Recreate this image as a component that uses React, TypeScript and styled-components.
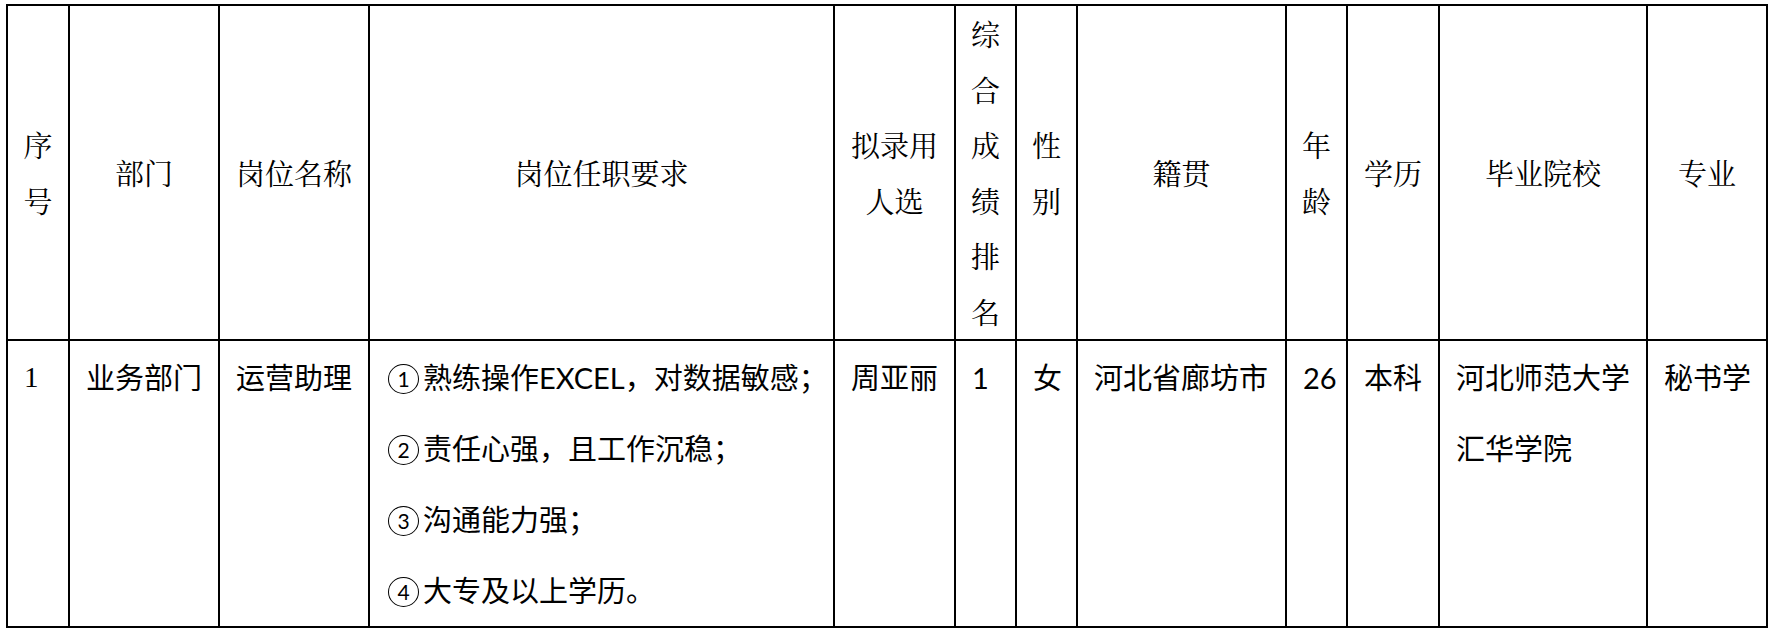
import React from "react";
import styled, { createGlobalStyle } from "styled-components";

const GlobalStyle = createGlobalStyle`
  html, body {
    margin: 0;
    padding: 0;
    background: #fff;
  }
  body {
    font-family: "Noto Sans CJK SC", sans-serif;
    color: #000;
  }
`;

const Page = styled.div`
  padding: 4px 0 0 6px;
`;

const Table = styled.table`
  border-collapse: collapse;
  table-layout: fixed;
  width: 1762px;
  border: 2px solid #000;
`;

const HeadCell = styled.th`
  height: 333px;
  padding: 0;
  border: 2px solid #000;
  text-align: center;
  vertical-align: middle;
  font-family: "Noto Serif CJK SC", "Noto Sans CJK SC", serif;
  font-weight: 400;
  font-size: 29px;
  line-height: 55.5px;
  white-space: nowrap;
`;

const BodyCell = styled.td<{ $serif?: boolean }>`
  height: 280px;
  padding: 1px 14px 0 16px;
  border: 2px solid #000;
  text-align: left;
  vertical-align: top;
  font-family: ${(p) =>
    p.$serif
      ? `"Liberation Serif", "Noto Sans CJK SC", serif`
      : `"Lato", "Noto Sans CJK SC", sans-serif`};
  font-size: 29px;
  line-height: 71px;
  white-space: nowrap;
`;

const Line = styled.div`
  display: block;
`;

// circled list number, drawn as a ring around a real digit
const Circled = styled.span`
  display: inline-flex;
  align-items: center;
  justify-content: center;
  box-sizing: border-box;
  width: 31px;
  height: 30px;
  margin: 0 4px 0 2px;
  border: 1.7px solid #000;
  border-radius: 50%;
  font-family: "Lato", sans-serif;
  font-size: 21px;
  line-height: 1;
  vertical-align: middle;
  position: relative;
  top: -3px;
`;

const columns = [62, 150, 150, 465, 121, 61, 61, 209, 61, 92, 208, 120];

const headers: string[][] = [
  ["序", "号"],
  ["部门"],
  ["岗位名称"],
  ["岗位任职要求"],
  ["拟录用", "人选"],
  ["综", "合", "成", "绩", "排", "名"],
  ["性", "别"],
  ["籍贯"],
  ["年", "龄"],
  ["学历"],
  ["毕业院校"],
  ["专业"],
];

type Entry = { num?: number; text: string };
type Cell = { lines: Entry[]; serif?: boolean };

const row: Cell[] = [
  { lines: [{ text: "1" }], serif: true },
  { lines: [{ text: "业务部门" }] },
  { lines: [{ text: "运营助理" }] },
  {
    lines: [
      { num: 1, text: "熟练操作EXCEL，对数据敏感；" },
      { num: 2, text: "责任心强，且工作沉稳；" },
      { num: 3, text: "沟通能力强；" },
      { num: 4, text: "大专及以上学历。" },
    ],
  },
  { lines: [{ text: "周亚丽" }] },
  { lines: [{ text: "1" }] },
  { lines: [{ text: "女" }] },
  { lines: [{ text: "河北省廊坊市" }] },
  { lines: [{ text: "26" }] },
  { lines: [{ text: "本科" }] },
  { lines: [{ text: "河北师范大学" }, { text: "汇华学院" }] },
  { lines: [{ text: "秘书学" }] },
];

export default function App() {
  return (
    <Page>
      <GlobalStyle />
      <Table>
        <colgroup>
          {columns.map((w, i) => (
            <col key={i} style={{ width: w }} />
          ))}
        </colgroup>
        <thead>
          <tr>
            {headers.map((h, i) => (
              <HeadCell key={i}>
                {h.map((l, j) => (
                  <Line key={j}>{l}</Line>
                ))}
              </HeadCell>
            ))}
          </tr>
        </thead>
        <tbody>
          <tr>
            {row.map((c, i) => (
              <BodyCell key={i} $serif={c.serif}>
                {c.lines.map((l, j) => (
                  <Line key={j}>
                    {l.num !== undefined && <Circled>{l.num}</Circled>}
                    {l.text}
                  </Line>
                ))}
              </BodyCell>
            ))}
          </tr>
        </tbody>
      </Table>
    </Page>
  );
}
